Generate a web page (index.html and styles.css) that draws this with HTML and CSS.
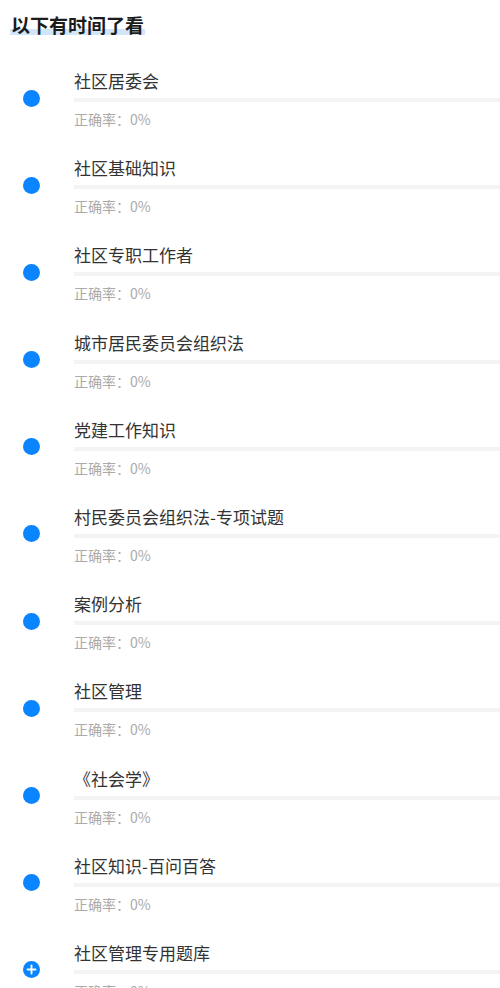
FILE: index.html
```html
<!DOCTYPE html>
<html lang="zh">

<head>
	<meta charset="UTF-8">
	<meta name="viewport" content="width=device-width, initial-scale=1.0">
	<title>题库列表</title>
	<link rel="stylesheet" href="styles.css">
</head>

<body>
	<div class="page">
		<h2 class="heading"><span>以下有时间了看</span></h2>

		<ul class="bank-list">
			<li class="bank">
				<div class="bank-icon"><i class="dot"></i></div>
				<div class="bank-body">
					<p class="bank-name">社区居委会</p>
					<div class="bank-bar"></div>
					<p class="bank-rate">正确率：0%</p>
				</div>
			</li>
			<li class="bank">
				<div class="bank-icon"><i class="dot"></i></div>
				<div class="bank-body">
					<p class="bank-name">社区基础知识</p>
					<div class="bank-bar"></div>
					<p class="bank-rate">正确率：0%</p>
				</div>
			</li>
			<li class="bank">
				<div class="bank-icon"><i class="dot"></i></div>
				<div class="bank-body">
					<p class="bank-name">社区专职工作者</p>
					<div class="bank-bar"></div>
					<p class="bank-rate">正确率：0%</p>
				</div>
			</li>
			<li class="bank">
				<div class="bank-icon"><i class="dot"></i></div>
				<div class="bank-body">
					<p class="bank-name">城市居民委员会组织法</p>
					<div class="bank-bar"></div>
					<p class="bank-rate">正确率：0%</p>
				</div>
			</li>
			<li class="bank">
				<div class="bank-icon"><i class="dot"></i></div>
				<div class="bank-body">
					<p class="bank-name">党建工作知识</p>
					<div class="bank-bar"></div>
					<p class="bank-rate">正确率：0%</p>
				</div>
			</li>
			<li class="bank">
				<div class="bank-icon"><i class="dot"></i></div>
				<div class="bank-body">
					<p class="bank-name">村民委员会组织法-专项试题</p>
					<div class="bank-bar"></div>
					<p class="bank-rate">正确率：0%</p>
				</div>
			</li>
			<li class="bank">
				<div class="bank-icon"><i class="dot"></i></div>
				<div class="bank-body">
					<p class="bank-name">案例分析</p>
					<div class="bank-bar"></div>
					<p class="bank-rate">正确率：0%</p>
				</div>
			</li>
			<li class="bank">
				<div class="bank-icon"><i class="dot"></i></div>
				<div class="bank-body">
					<p class="bank-name">社区管理</p>
					<div class="bank-bar"></div>
					<p class="bank-rate">正确率：0%</p>
				</div>
			</li>
			<li class="bank">
				<div class="bank-icon"><i class="dot"></i></div>
				<div class="bank-body">
					<p class="bank-name">《社会学》</p>
					<div class="bank-bar"></div>
					<p class="bank-rate">正确率：0%</p>
				</div>
			</li>
			<li class="bank">
				<div class="bank-icon"><i class="dot"></i></div>
				<div class="bank-body">
					<p class="bank-name">社区知识-百问百答</p>
					<div class="bank-bar"></div>
					<p class="bank-rate">正确率：0%</p>
				</div>
			</li>
			<li class="bank">
				<div class="bank-icon">
					<svg class="plus" viewBox="0 0 18 18" width="18" height="18">
						<circle cx="9" cy="9" r="9" fill="#0a84ff" />
						<path d="M9 4.8v8.4M4.8 9h8.4" stroke="#fff" stroke-width="2" stroke-linecap="round" />
					</svg>
				</div>
				<div class="bank-body">
					<p class="bank-name">社区管理专用题库</p>
					<div class="bank-bar"></div>
					<p class="bank-rate">正确率：0%</p>
				</div>
			</li>
		</ul>
	</div>
</body>

</html>
```

FILE: styles.css
```css
* {
	margin: 0;
	padding: 0;
	box-sizing: border-box;
}

body {
	background: #fff;
	font-family: "Noto Sans CJK SC", "Noto Sans", sans-serif;
	overflow: hidden;
}

.page {
	width: 500px;
	height: 988px;
	overflow: hidden;
}

.heading {
	padding: 12px 0 0 10px;
	font-size: 19px;
	line-height: 26px;
	font-weight: 700;
	color: #1c1c1c;
}

.heading>span {
	display: inline-block;
	padding: 0 1px;
	line-height: 26px;
	background: linear-gradient(transparent 64%, #d2e5f9 64%, #d2e5f9 88%, transparent 88%);
}

.bank-list {
	list-style: none;
	margin-top: 31px;
}

.bank {
	display: flex;
	height: 87.2px;
}

.bank-icon {
	width: 74px;
	flex-shrink: 0;
	display: flex;
	justify-content: center;
	padding-top: 20.5px;
	padding-right: 12px;
}

.dot {
	display: block;
	width: 17px;
	height: 17px;
	border-radius: 50%;
	background: #0a84ff;
}

.plus {
	display: block;
	width: 17px;
	height: 17px;
}

.bank-body {
	flex: 1;
}

.bank-name {
	font-size: 17px;
	line-height: 24px;
	color: #333;
}

.bank-bar {
	height: 4px;
	margin-top: 5px;
	background: #f4f4f4;
}

.bank-rate {
	margin-top: 7px;
	font-size: 14px;
	line-height: 20px;
	color: #aaa;
}
```
